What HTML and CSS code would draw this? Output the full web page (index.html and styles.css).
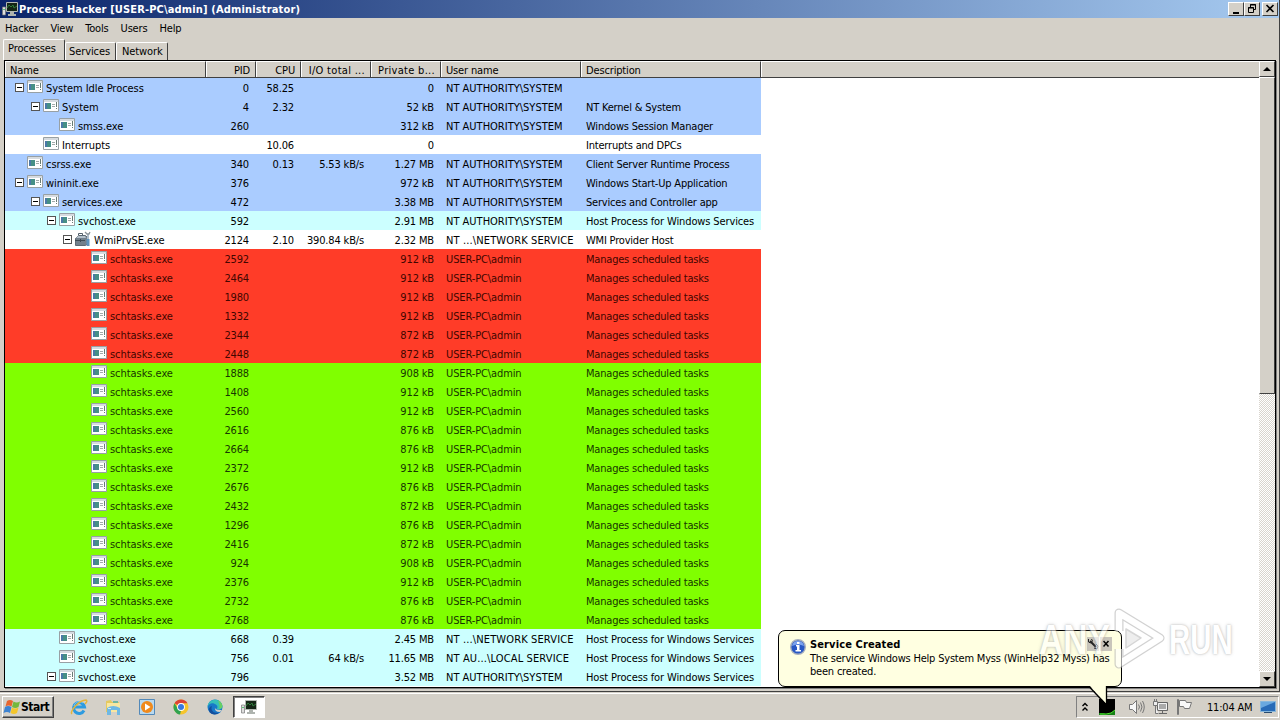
FILE: index.html
```html
<!DOCTYPE html>
<html lang="en">
<head>
    <meta charset="UTF-8">
    <title>Process Hacker</title>
    <link rel="stylesheet" href="styles.css">
</head>
<body>

    <!-- Shared icons -->
    <svg class="defs" width="0" height="0">
        <symbol id="i-app" viewBox="0 0 16 13">
            <path fill="#fff" stroke="#98a0a4" d="M.5.5h15v12H.5z"/>
            <path fill="#d6dbe0" d="M1 1h14v2H1z"/>
            <path fill="#468f86" d="M2 4h6v6H2z"/>
            <path fill="#4b78a8" d="M2 4h2v6H2z"/>
            <path stroke="#a2aaaa" d="M9 5.500h3M9 7.500h3"/>
            <path stroke="#687c75" d="M13.5 3v5M13.5 9v1"/>
        </symbol>
        <symbol id="i-wmi" viewBox="0 0 16 16">
            <path fill="#72808c" stroke="#5c6974" d="M.5 7.500l3-3h7l2 2v6l-2 2H.5z"/>
            <path fill="#b4c0ca" d="M3 5h7l1 2H1z"/>
            <path fill="none" stroke="#53606b" d="M3.5 4V2.500h4V4"/>
            <path stroke="#3e4b55" d="M0 9.500h10M5.500 8v3"/>
            <path stroke="#aebdcb" stroke-width="2" d="M13 3v6"/>
            <path stroke="#5d93bd" stroke-width="3" d="M13 8v7"/>
            <path fill="none" stroke="#8a9298" stroke-width="1.300" d="M10 1l2 2h2l1-2"/>
        </symbol>
        <symbol id="i-hacker" viewBox="0 0 16 16">
            <path fill="#dedede" stroke="#777" stroke-width=".7" d="M.5 6h3v8h-3z"/>
            <path stroke="#5c7" d="M1 8.500h2"/>
            <path fill="#142516" stroke="#b2b7b2" d="M4.500 1.500h11v9h-11z"/>
            <path fill="none" stroke="#2f7c3b" d="M5 7l2-3 2 2 2-2 1 3 3-2"/>
            <path fill="#aeb3ae" d="M8 11h4v2h2v2H6v-2h2z"/>
        </symbol>
        <symbol id="i-flag" viewBox="0 0 18 18">
            <path fill="#e7652e" d="M4 3q3-2 6 0L8.500 8.500q-3-2-6 0z"/>
            <path fill="#74b83c" d="M10.500 3.500q3 2 6.500 0L15.500 9q-3 2-6.500 0z"/>
            <path fill="#3d83d1" d="M2 9q3-2 6.500 0L7 15q-3-2-6.500 0z"/>
            <path fill="#f4c62c" d="M9 9.500q3 2 6.500 0L14 15q-3 2-6.500 0z"/>
        </symbol>
    </svg>

    <div class="window">
        <div class="titlebar">
            <svg class="title-icon"><use href="#i-hacker"/></svg>
            <span class="title-text">Process Hacker [USER-PC\admin] (Administrator)</span>
            <div class="title-buttons">
                <span class="win-btn"><svg width="14" height="12"><path fill="#000" d="M4 9h6v2H4z"/></svg></span>
                <span class="win-btn"><svg width="14" height="12"><path fill="none" stroke="#000" d="M5.500 4V1.500h5v5H9M5 2h6M3.500 4.500h5v5h-5zM3 5h6"/></svg></span>
                <span class="win-btn close"><svg width="14" height="12"><path stroke="#000" stroke-width="1.600" d="M3.500 2l7 7M10.500 2l-7 7"/></svg></span>
            </div>
        </div>

        <div class="menubar">
            <span>Hacker</span><span>View</span><span>Tools</span><span>Users</span><span>Help</span>
        </div>

        <div class="tabs">
            <span class="tab active">Processes</span>
            <span class="tab services">Services</span>
            <span class="tab network">Network</span>
        </div>

        <div class="list">
            <div class="list-main">
                <div class="header">
                    <span>Name</span>
                    <span class="num">PID</span>
                    <span class="num">CPU</span>
                    <span class="num wide">I/O total ...</span>
                    <span class="num wide">Private b...</span>
                    <span>User name</span>
                    <span>Description</span>
                    <span></span>
                </div>
                <div class="rows" id="rows"></div>
            </div>
            <div class="scrollbar">
                <span class="scroll-btn"><svg width="8" height="4"><path d="M0 4l4-4 4 4z"/></svg></span>
                <span class="thumb"></span>
                <span class="track"></span>
                <span class="scroll-btn"><svg width="8" height="4"><path d="M0 0h8L4 4z"/></svg></span>
            </div>
        </div>
    </div>

    <div class="taskbar">
        <div class="start"><svg width="18" height="18"><use href="#i-flag"/></svg><b>Start</b></div>
        <div class="quick">
            <!-- Internet Explorer -->
            <svg viewBox="0 0 18 18">
                <path fill="none" stroke="#2d9be0" stroke-width="3" d="M14 12.500A5.500 5.500 0 1 1 14.500 9H5"/>
                <path fill="none" stroke="#8ed4f5" stroke-width=".8" d="M4 8a5.500 5.500 0 0 1 9-3"/>
                <path fill="none" stroke="#e5b53b" stroke-width="1.500" d="M2 16C-1 14 9 2 16 2q2 1-1 4"/>
            </svg>
            <!-- Explorer -->
            <svg viewBox="0 0 18 18">
                <path fill="#e5c95f" d="M2 3l5-1 1 2h7v10H2z"/>
                <path fill="#f9e7a0" d="M3 5h13v9H3z"/>
                <path fill="#71b6a0" d="M9 3h5v2H9z"/>
                <path fill="#6fb8e4" d="M3 10q6-4 13 0v7h-3v-5H7v5H3z"/>
                <path fill="#c9e9f7" d="M4 10h3v1H4z"/>
            </svg>
            <!-- Media player -->
            <svg viewBox="0 0 18 18">
                <path fill="#b9d9ef" stroke="#5389b9" d="M1.500 1.500h15v15h-15z"/>
                <circle cx="9" cy="9" r="6" fill="#f08a1c"/>
                <path fill="#fff" d="M7 5.500L12.500 9 7 12.500z"/>
            </svg>
            <!-- Chrome -->
            <svg viewBox="0 0 18 18">
                <circle cx="9" cy="9" r="7.500" fill="#f6c52c"/>
                <path fill="#dc4336" d="M9 9L2.500 5.200A7.500 7.500 0 0 1 15.500 5.200H9z"/>
                <path fill="#31a350" d="M2.500 5.200L6 11l3 1.500-1 4A7.500 7.500 0 0 1 2.500 5.200z"/>
                <circle cx="9" cy="9" r="3.900" fill="#fff"/>
                <circle cx="9" cy="9" r="3" fill="#3979df"/>
            </svg>
            <!-- Edge -->
            <svg viewBox="0 0 18 18">
                <circle cx="9" cy="9" r="7.500" fill="#1878c8"/>
                <path fill="#36bfb9" d="M1.500 9C2 0 15-1 16.500 8c0 3-3 4-6 3q2-2 0-4C7 4 3 5 1.500 9z"/>
                <path fill="#69cf64" d="M12 2.200q4 2 4.500 6-.5 2.500-3 3 .5-5-1.500-9z"/>
                <path fill="#134e9c" d="M6 8c-2 4 2 8 7 6.500-4 4-11 1.500-10-4Q4 8 6 8z"/>
                <path fill="#d4d0c8" d="M9 8.500q-1 4 7 3.500l-2 2q-6 0-5-5.500z"/>
            </svg>
        </div>
        <div class="task"><svg width="18" height="16"><use href="#i-hacker"/></svg></div>
        <div class="tray">
            <svg class="chevron" width="8" height="10"><path fill="none" stroke="#000" stroke-width="1.400" d="M1.500 4L4 1.500 6.500 4M1.500 8.500L4 6l2.500 2.500"/></svg>
            <svg class="graph" width="16" height="16"><path d="M0 0h16v16H0z"/><path fill="#168016" d="M0 14h5l2 1 5-1 4-3v5H0z"/><path fill="none" stroke="#4fe02f" d="M1 15h6l5-1 4-3"/></svg>
            <svg class="speaker" width="18" height="16"><path fill="#f7f7f7" stroke="#777" d="M1.500 5.500h3l4-4v13l-4-4h-3z"/><path fill="none" stroke="#777" d="M10.500 5.500q2 2.500 0 5M12.500 3.500q3 4.500 0 9M14.500 2q3.500 6 0 12"/></svg>
            <svg class="net" width="17" height="16"><path fill="#aaa" stroke="#666" d="M5.500 3.500h10v8h-10z"/><path fill="none" stroke="#f4f4f4" d="M6.500 4.500h8v6h-8z"/><path stroke="#666" d="M10.500 12v2M7 14.500h8"/><path fill="#eee" stroke="#777" d="M1.500 2.500h4v4h-4zM2.500 0v2M4.500 0v2M3.500 7v7.500h3"/></svg>
            <svg class="action" width="17" height="16"><path fill="#f8f8f8" stroke="#777" d="M1.500.5h1v15h-1zM3.500 1.500h6l1 2h5l-2 6h-5l-1-2h-4z"/></svg>
            <span class="clock">11:04 AM</span>
            <svg class="desktop" width="17" height="16"><path fill="#286bb7" stroke="#87b7db" d="M.5 2.500h15v10H.5z"/><path fill="#69a8df" d="M1 3h14L1 9z"/><path fill="#294b70" d="M4 13h8v1H4z"/></svg>
        </div>
    </div>

    <!-- Notification balloon -->
    <div class="balloon">
        <svg class="info" width="18" height="18"><circle cx="9" cy="9" r="7.300" fill="#2858c4" stroke="#a8b0bd" stroke-width="1.400"/><path fill="#7ba2ec" d="M3 8q1-5 6-5t6 5Q9 5 3 8z"/><path fill="#fff" d="M8 4h2.500v2H8zM7 7h3.500v5H12v1.500H6.500V12H8V8.500H7z"/></svg>
        <div class="balloon-text">
            <b>Service Created</b>
            <p>The service Windows Help System Myss (WinHelp32 Myss) has<br>been created.</p>
        </div>
        <div class="balloon-buttons">
            <span><svg width="12" height="14"><path fill="none" stroke="#222" stroke-width="2" d="M3 4l6 6"/><path fill="none" stroke="#222" d="M1.500 2v3l2 1 2-2-1-2M7 11l3 1 1-3-2-2"/></svg></span>
            <span><svg width="12" height="14"><path stroke="#000" stroke-width="1.500" d="M3.500 4l5 5.500M8.500 4l-5 5.500"/></svg></span>
        </div>
        <svg class="tail" width="22" height="24"><path fill="#ffffe1" d="M1 0h18v20z"/><path fill="none" stroke="#000" stroke-width="1.300" d="M1 1.500L18.500 20V1"/></svg>
    </div>

    <div class="watermark">
        <span class="any">ANY</span>
        <svg width="56" height="66"><g fill="none" stroke-linejoin="round"><path stroke="#b4b4b4" stroke-width="9" d="M8 24V6l41 25L8 57V42"/><path stroke="#fff" stroke-width="6.500" d="M8 24V6l41 25L8 57V42"/><path fill="#e4e4e4" stroke="#bbb" stroke-width="1.500" d="M15 22v19l15-10z"/></g></svg>
        <span class="run">RUN</span>
    </div>

    <script>
        // colour, level, expandable, name, pid, cpu, io, private bytes, user, description
        const SYS = 'NT AUTHORITY\\SYSTEM';
        const HOST = 'Host Process for Windows Services';
        const rows = [
            ['blue', 0, 1, 'System Idle Process', '0', '58.25', '', '0', SYS, ''],
            ['blue', 1, 1, 'System', '4', '2.32', '', '52 kB', SYS, 'NT Kernel & System'],
            ['blue', 2, 0, 'smss.exe', '260', '', '', '312 kB', SYS, 'Windows Session Manager'],
            ['white', 1, 0, 'Interrupts', '', '10.06', '', '0', '', 'Interrupts and DPCs'],
            ['blue', 0, 0, 'csrss.exe', '340', '0.13', '5.53 kB/s', '1.27 MB', SYS, 'Client Server Runtime Process'],
            ['blue', 0, 1, 'wininit.exe', '376', '', '', '972 kB', SYS, 'Windows Start-Up Application'],
            ['blue', 1, 1, 'services.exe', '472', '', '', '3.38 MB', SYS, 'Services and Controller app'],
            ['cyan', 2, 1, 'svchost.exe', '592', '', '', '2.91 MB', SYS, HOST],
            ['white', 3, 1, 'WmiPrvSE.exe', '2124', '2.10', '390.84 kB/s', '2.32 MB', 'NT ...\\NETWORK SERVICE', 'WMI Provider Host']
        ];

        const addTasks = (color, list) => list.forEach(([pid, mem]) =>
            rows.push([color, 4, 0, 'schtasks.exe', pid, '', '', mem + ' kB', 'USER-PC\\admin', 'Manages scheduled tasks']));

        addTasks('red', [[2592, 912], [2464, 912], [1980, 912], [1332, 912], [2344, 872], [2448, 872]]);
        addTasks('green', [[1888, 908], [1408, 912], [2560, 912], [2616, 876], [2664, 876], [2372, 912], [2676, 876],
            [2432, 872], [1296, 876], [2416, 872], [924, 908], [2376, 912], [2732, 876], [2768, 876]]);

        rows.push(
            ['cyan', 2, 0, 'svchost.exe', '668', '0.39', '', '2.45 MB', 'NT ...\\NETWORK SERVICE', HOST],
            ['cyan', 2, 0, 'svchost.exe', '756', '0.01', '64 kB/s', '11.65 MB', 'NT AU...\\LOCAL SERVICE', HOST],
            ['cyan', 2, 1, 'svchost.exe', '796', '', '', '3.52 MB', SYS, HOST]
        );

        document.getElementById('rows').innerHTML = rows.map(([color, level, open, name, pid, cpu, io, mem, user, desc]) => `
            <div class="row ${color}">
                <span class="name" style="padding-left:${10 + level * 16}px">
                    <i class="${open ? 'box' : 'nobox'}"></i>
                    <svg class="${name === 'WmiPrvSE.exe' ? 'wmi' : 'app'}"><use href="#${name === 'WmiPrvSE.exe' ? 'i-wmi' : 'i-app'}"/></svg>
                    <span>${name}</span>
                </span>
                <span class="num">${pid}</span>
                <span class="num">${cpu}</span>
                <span class="num">${io}</span>
                <span class="num">${mem}</span>
                <span class="user ${user.includes('SERVICE') ? 'service' : ''}">${user}</span>
                <span class="desc">${desc.replace('&', '&amp;')}</span>
            </div>`).join('');
    </script>

</body>
</html>
```
FILE: styles.css
```css
* {
    box-sizing: border-box;
}

body {
    margin: 0;
    width: 1280px;
    height: 720px;
    overflow: hidden;
    background: #d4d0c8;
    color: #000;
    font: 11px/13px "DejaVu Sans Condensed", "DejaVu Sans", sans-serif;
    font-stretch: condensed;
    letter-spacing: -0.2px;
    position: relative;
}

.defs {
    position: absolute;
}

svg {
    display: block;
    flex: none;
}

/* Window */
.window {
    height: 692px;
    display: flex;
    flex-direction: column;
    border-right: 1px solid #404040;
    border-bottom: 1px solid #404040;
}

.titlebar {
    height: 18px;
    display: flex;
    align-items: center;
    padding: 0 1px 0 2px;
    background: linear-gradient(90deg, #0a246a, #a6caf0);
    color: #fff;
}

.title-icon {
    width: 16px;
    height: 16px;
    margin-right: 1px;
}

.title-text {
    font-weight: bold;
    letter-spacing: 0.15px;
    white-space: nowrap;
}

.title-buttons {
    display: flex;
    margin-left: auto;
}

.win-btn {
    width: 16px;
    height: 14px;
    background: #d4d0c8;
    border: 1px solid;
    border-color: #fff #404040 #404040 #fff;
}

.win-btn.close {
    margin-left: 2px;
}

.menubar {
    height: 21px;
    display: flex;
    align-items: center;
    gap: 12px;
    padding-left: 5px;
    letter-spacing: -0.17px;
}

.tabs {
    height: 21px;
    display: flex;
    align-items: flex-end;
    padding-left: 3px;
    letter-spacing: -0.1px;
}

.tab {
    height: 19px;
    padding: 2px 0 0 5px;
    border: 1px solid #fff;
    border-right: 1px solid #404040;
    border-bottom: 0;
    border-radius: 2px 2px 0 0;
    margin-bottom: -1px;
}

.tab.active {
    width: 62px;
    height: 21px;
    padding-left: 4px;
    padding-top: 2px;
    margin-bottom: 0;
}

.tab.services {
    width: 51px;
    padding-left: 3px;
}

.tab.network {
    width: 52px;
}

/* Process list */
.list {
    flex: 1;
    display: flex;
    margin: 0 3px 3px 4px;
    border: 1px solid #000;
    background: #fff;
    overflow: hidden;
    box-shadow: 1px 1px #808080;
}

.list-main {
    flex: 1;
    overflow: hidden;
}

.header,
.row {
    display: grid;
    grid-template-columns: 201px 50px 45px 70px 70px 140px 180px 1fr;
}

.header {
    height: 17px;
    background: #d4d0c8;
    border-bottom: 1px solid #404040;
}

.header span {
    padding: 3px 5px 0 4px;
    border-left: 1px solid #fff;
    border-top: 1px solid #fff;
    border-right: 1px solid #404040;
    white-space: nowrap;
    overflow: hidden;
    line-height: 12px;
    letter-spacing: -0.15px;
}

.header span:last-child {
    border-right: 0;
}

.header .wide {
    letter-spacing: 0.3px;
}

.num {
    text-align: right;
}

.row {
    width: 756px;
    height: 19px;
    line-height: 21px;
    white-space: nowrap;
}

.row .num {
    padding-right: 7px;
    letter-spacing: -0.15px;
}

.blue { background: #aaccff; }
.white { background: #fff; }
.cyan { background: #ccffff; }
.red { background: #ff3c28; color: #410600; }
.green { background: #80ff00; color: #173600; }

.name {
    display: flex;
    letter-spacing: -0.05px;
}

.box,
.nobox {
    width: 9px;
    height: 9px;
    margin: 5px 3px 0 0;
}

.box {
    border: 1px solid #555;
    background: linear-gradient(#000, #000) center / 5px 1px no-repeat #fff;
}

.app {
    width: 16px;
    height: 13px;
    margin: 2px 3px 0 0;
}

.wmi {
    width: 16px;
    height: 16px;
    margin: 1px 3px 0 0;
}

.user,
.desc {
    padding-left: 5px;
}

.user {
    letter-spacing: 0;
}

.user.service {
    letter-spacing: 0.13px;
}

.red .user,
.green .user {
    letter-spacing: -0.12px;
}

.desc {
    letter-spacing: -0.2px;
}

.cyan .desc {
    letter-spacing: -0.12px;
}

.scrollbar {
    width: 16px;
    display: flex;
    flex-direction: column;
}

.scroll-btn,
.thumb {
    background: #d4d0c8;
    border: 1px solid;
    border-color: #fff #404040 #404040 #fff;
}

.scroll-btn {
    height: 16px;
    display: flex;
    align-items: center;
    justify-content: center;
}

.thumb {
    height: 317px;
}

.track {
    flex: 1;
    background: repeating-conic-gradient(#fff 0 25%, #d9d5ce 0 50%) 0 0 / 2px 2px;
}

/* Taskbar */
.taskbar {
    height: 28px;
    display: flex;
    border-top: 1px solid #d4d0c8;
    box-shadow: inset 0 1px #fff;
    padding: 3px 1px 2px 2px;
}

.start {
    width: 52px;
    height: 22px;
    display: flex;
    align-items: center;
    border: 1px solid;
    border-color: #fff #404040 #404040 #fff;
    box-shadow: inset -1px -1px #808080;
    font-size: 12px;
    letter-spacing: -0.5px;
}

.quick {
    display: flex;
    gap: 16px;
    margin-left: 16px;
    padding-top: 2px;
}

.quick svg {
    width: 18px;
    height: 18px;
}

.task {
    width: 32px;
    height: 22px;
    margin-left: 9px;
    padding: 2px 6px;
    background: #fff;
    border: 1px solid;
    border-color: #404040 #fff #fff #404040;
    box-shadow: inset 1px 1px #808080;
}

.tray {
    width: 203px;
    height: 22px;
    margin-left: auto;
    display: flex;
    align-items: center;
    padding-left: 4px;
    border: 1px solid;
    border-color: #808080 #fff #fff #808080;
}

.graph { margin-left: 10px; }
.speaker { margin-left: 13px; }
.net { margin-left: 6px; }
.action { margin-left: 7px; }

.clock {
    width: 48px;
    margin-left: 14px;
    white-space: nowrap;
}

.desktop {
    margin-left: 5px;
}

/* Balloon over the tray */
.balloon {
    position: absolute;
    left: 778px;
    top: 630px;
    width: 344px;
    height: 57px;
    display: flex;
    padding: 7px 10px 0 10px;
    background: #ffffe1;
    border: 1px solid #000;
    border-radius: 7px;
}

.balloon-text {
    margin-left: 3px;
    white-space: nowrap;
}

.balloon-text b {
    letter-spacing: 0.12px;
}

.balloon-text p {
    margin: 1px 0 0;
}

.balloon-buttons {
    position: absolute;
    right: 9px;
    top: 6px;
    display: flex;
    gap: 1px;
}

.balloon-buttons span {
    width: 12px;
    height: 14px;
    background: #c9c5bb;
}

.tail {
    position: absolute;
    left: 309px;
    top: 54px;
}

.watermark {
    position: absolute;
    left: 1039px;
    top: 607px;
    display: flex;
    align-items: center;
    opacity: 0.6;
    color: #fff;
    font: bold 42px/66px "Liberation Sans", sans-serif;
    letter-spacing: 0;
    text-shadow: 0 0 2px #999, 0 0 4px #aaa;
}

.watermark span {
    display: block;
    width: 72px;
    transform: scaleX(0.8);
    transform-origin: left;
}

.watermark .run {
    width: 64px;
    margin-left: 2px;
    transform: scaleX(0.7);
}
```
